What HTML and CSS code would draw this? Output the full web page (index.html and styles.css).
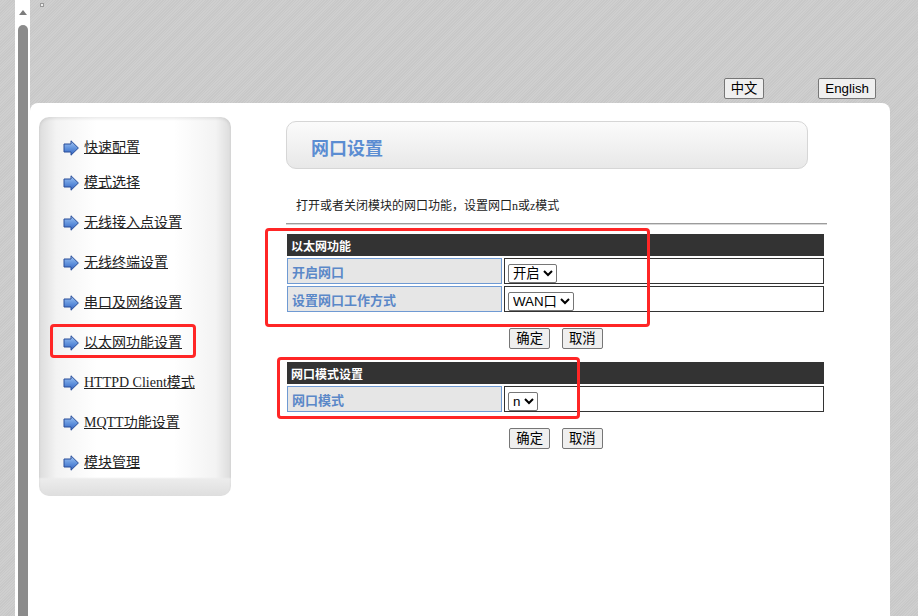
FILE: index.html
```html
<!DOCTYPE html>
<html>
<head>
    <meta charset="utf-8">
    <title>网口设置</title>
    <link rel="stylesheet" href="styles.css">
</head>
<body>
    <div class="gutter"></div>
    <div class="scroll-track">
        <div class="scroll-up"></div>
        <div class="scroll-thumb"></div>
    </div>

    <div class="page">
        <div class="lang-bar">
            <span class="broken-img"></span>
            <button class="btn">中文</button>
            <button class="btn">English</button>
        </div>

        <div class="panel">
            <div class="sidebar">
                <ul class="menu">
                    <li><svg class="arrow" viewBox="0 0 16 16"><use href="#arr"/></svg><a href="#">快速配置</a></li>
                    <li><svg class="arrow" viewBox="0 0 16 16"><use href="#arr"/></svg><a href="#">模式选择</a></li>
                    <li><svg class="arrow" viewBox="0 0 16 16"><use href="#arr"/></svg><a href="#">无线接入点设置</a></li>
                    <li><svg class="arrow" viewBox="0 0 16 16"><use href="#arr"/></svg><a href="#">无线终端设置</a></li>
                    <li><svg class="arrow" viewBox="0 0 16 16"><use href="#arr"/></svg><a href="#">串口及网络设置</a></li>
                    <li class="current">
                        <svg class="arrow" viewBox="0 0 16 16"><use href="#arr"/></svg><a href="#">以太网功能设置</a>
                        <div class="mark mark-menu"></div>
                    </li>
                    <li><svg class="arrow" viewBox="0 0 16 16"><use href="#arr"/></svg><a href="#">HTTPD Client模式</a></li>
                    <li><svg class="arrow" viewBox="0 0 16 16"><use href="#arr"/></svg><a href="#">MQTT功能设置</a></li>
                    <li><svg class="arrow" viewBox="0 0 16 16"><use href="#arr"/></svg><a href="#">模块管理</a></li>
                </ul>
            </div>

            <div class="content">
                <div class="title-box">网口设置</div>
                <p class="desc">打开或者关闭模块的网口功能，设置网口n或z模式</p>
                <div class="rule"></div>

                <div class="section section-eth">
                    <table class="form-table">
                        <tr><td class="head" colspan="2">以太网功能</td></tr>
                        <tr>
                            <td class="label">开启网口</td>
                            <td class="value">
                                <select><option>开启</option><option>关闭</option></select>
                            </td>
                        </tr>
                        <tr>
                            <td class="label">设置网口工作方式</td>
                            <td class="value">
                                <select><option>WAN口</option><option>LAN口</option></select>
                            </td>
                        </tr>
                    </table>
                    <div class="actions">
                        <button class="btn">确定</button>
                        <button class="btn">取消</button>
                    </div>
                    <div class="mark mark-eth"></div>
                </div>

                <div class="section section-mode">
                    <table class="form-table">
                        <tr><td class="head" colspan="2">网口模式设置</td></tr>
                        <tr>
                            <td class="label">网口模式</td>
                            <td class="value">
                                <select><option>n</option><option>z</option></select>
                            </td>
                        </tr>
                    </table>
                    <div class="actions">
                        <button class="btn">确定</button>
                        <button class="btn">取消</button>
                    </div>
                    <div class="mark mark-mode"></div>
                </div>
            </div>
        </div>
    </div>

    <svg width="0" height="0" style="position:absolute">
        <defs>
            <linearGradient id="arr-fill" x1="0" y1="0" x2="0" y2="1">
                <stop offset="0" stop-color="#a4c6f4"/>
                <stop offset="0.5" stop-color="#6394dd"/>
                <stop offset="1" stop-color="#3564c2"/>
            </linearGradient>
            <path id="arr" d="M1 4 H8 V0.8 L15.4 8 L8 15.2 V12 H1 Z" fill="url(#arr-fill)" stroke="#284d98" stroke-width="1" stroke-linejoin="round"/>
        </defs>
    </svg>
</body>
</html>
```

FILE: styles.css
```css
* {
    box-sizing: border-box;
}
body {
    margin: 0;
    height: 616px;
    overflow: hidden;
    display: flex;
    font-family: "Liberation Serif", "Noto Sans CJK SC", serif;
    color: #222;
    background-color: #c8c8c8;
    background-image: repeating-linear-gradient(135deg, rgba(255, 255, 255, 0.12) 0 1px, transparent 1px 2px);
}
.gutter {
    width: 15px;
    flex-shrink: 0;
}
.scroll-track {
    width: 15px;
    flex-shrink: 0;
    background: #fff;
    display: flex;
    flex-direction: column;
    align-items: center;
}
.scroll-up {
    margin-top: 10px;
    width: 0;
    height: 0;
    border-left: 4px solid transparent;
    border-right: 4px solid transparent;
    border-bottom: 5px solid #7c7c7c;
}
.scroll-thumb {
    margin-top: 10px;
    width: 10px;
    flex: 1;
    background: #8b8b8b;
    border-radius: 5px 5px 0 0;
}
.page {
    flex: 1;
    display: flex;
    flex-direction: column;
}
.lang-bar {
    height: 103px;
    display: flex;
    align-items: flex-start;
    justify-content: flex-end;
    gap: 54px;
    padding: 78px 42px 0 0;
    position: relative;
}
.broken-img {
    position: absolute;
    left: 10px;
    top: 3px;
    width: 4px;
    height: 4px;
    background: #eee;
    border: 1px solid #999;
}
.btn {
    font-family: "Liberation Sans", "Noto Sans CJK SC", sans-serif;
    font-size: 13.33px;
    line-height: 16px;
    height: 21px;
    padding: 1px 6px;
    color: #000;
    background: #efefef;
    border: 1px solid #767676;
    border-radius: 2px;
}
.panel {
    width: 860px;
    flex: 1;
    background: #fff;
    border-radius: 8px 8px 0 0;
    display: flex;
    align-items: flex-start;
}

/* left menu */
.sidebar {
    margin: 14px 0 0 9px;
    width: 192px;
    height: 379px;
    flex-shrink: 0;
    border-radius: 10px;
    padding: 21px 0 0 24px;
    background:
        linear-gradient(to bottom, rgba(230, 230, 230, 0) 0, rgba(230, 230, 230, 0) 95%, #ececec 95.5%, #dedede 100%),
        linear-gradient(to right, #dcdcdc 0, #f3f3f3 9%, #fff 30%, #fff 70%, #f3f3f3 92%, #dcdcdc 100%);
    box-shadow: inset 0 2px 3px rgba(0, 0, 0, 0.08);
}
.menu {
    list-style: none;
    margin: 0;
    padding: 0;
}
.menu li {
    position: relative;
    display: flex;
    align-items: center;
    gap: 5px;
    height: 20px;
}
.menu li + li {
    margin-top: 20px;
}
.menu li:nth-child(2) {
    margin-top: 15px;
}
.arrow {
    width: 16px;
    height: 16px;
    flex-shrink: 0;
}
.menu a {
    font-size: 14px;
    line-height: 20px;
    color: #222;
    text-decoration: underline;
}

/* red annotation boxes */
.mark {
    position: absolute;
    border: 3px solid #ff2626;
    border-radius: 4px;
    pointer-events: none;
}
.mark-menu {
    left: -13px;
    top: -9px;
    width: 146px;
    height: 34px;
}
.mark-eth {
    left: -20px;
    top: -4px;
    width: 385px;
    height: 99px;
}
.mark-mode {
    left: -8px;
    top: -3px;
    width: 303px;
    height: 62px;
}

/* right content */
.content {
    margin-left: 54px;
    width: 542px;
    padding-top: 18px;
}
.title-box {
    margin-left: 1px;
    width: 522px;
    height: 48px;
    display: flex;
    align-items: center;
    padding: 4px 0 0 24px;
    border: 1px solid #d6d6d6;
    border-radius: 10px;
    background: linear-gradient(to bottom, #fbfbfb, #e8e8e8);
    font-family: "Noto Sans CJK SC", sans-serif;
    font-size: 18px;
    font-weight: bold;
    color: #5b8dd2;
}
.desc {
    margin: 28px 0 0;
    padding-left: 11px;
    font-size: 12px;
    line-height: 18px;
    color: #222;
}
.rule {
    margin: 8px 0 0 1px;
    width: 541px;
    height: 2px;
    border-top: 1px solid #9c9c9c;
    border-bottom: 1px solid #d8d8d8;
}
.section {
    position: relative;
    margin-top: 11px;
}
.section-eth {
    margin-top: 7px;
}
.form-table {
    width: 541px;
    border-collapse: separate;
    border-spacing: 2px;
    font-family: "Noto Sans CJK SC", sans-serif;
}
.form-table td {
    padding: 0;
}
.form-table .head {
    height: 22px;
    padding: 0 4px;
    background: #333;
    color: #fff;
    font-size: 12px;
    font-weight: bold;
}
.form-table .label {
    width: 215px;
    height: 26px;
    padding: 0 4px;
    border: 1px solid #6f9ad3;
    background: #e6e6e6;
    color: #5b88c8;
    font-size: 13px;
    font-weight: bold;
}
.form-table .value {
    height: 26px;
    padding: 0 3px;
    border: 1px solid #333;
    background: #fff;
}
.form-table select {
    font-family: "Liberation Sans", "Noto Sans CJK SC", sans-serif;
    font-size: 13.33px;
    height: 19px;
    padding: 0;
    color: #000;
    background: #fff;
    border: 1px solid #767676;
    border-radius: 2px;
    vertical-align: middle;
}
.actions {
    display: flex;
    justify-content: center;
    gap: 12px;
    margin-top: 14px;
}
```
